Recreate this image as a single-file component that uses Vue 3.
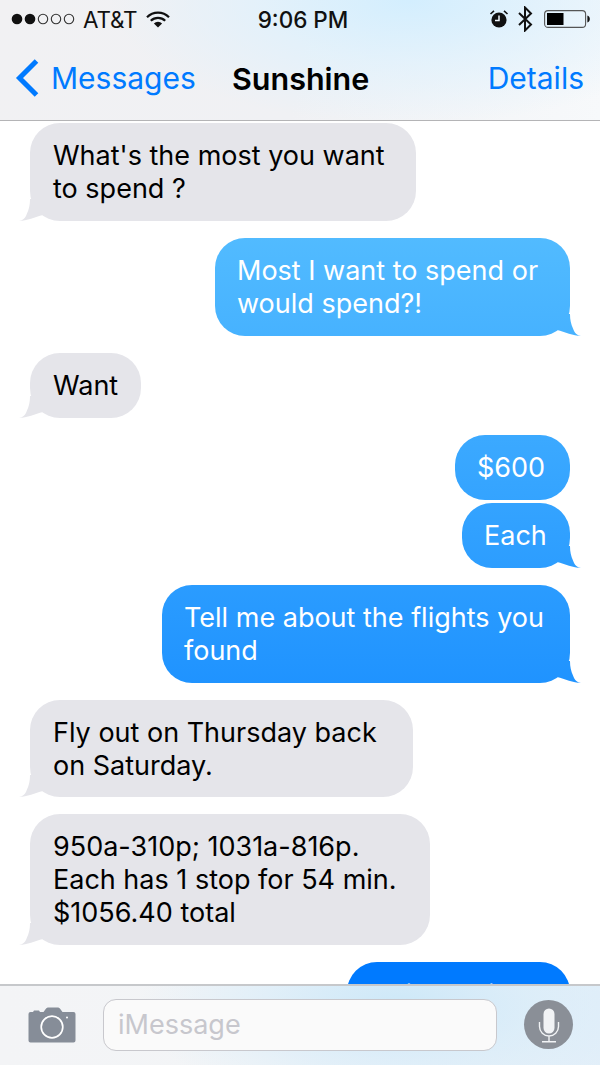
<template>
  <div class="phone">
    <header class="top">
      <div class="status">
        <div class="status-left">
          <svg class="dots" width="68" height="14" viewBox="0 0 68 14">
            <circle cx="6" cy="7" r="5.3" fill="#111" />
            <circle cx="19" cy="7" r="5.3" fill="#111" />
            <circle cx="32" cy="7" r="4.7" fill="none" stroke="#333" stroke-width="1.1" />
            <circle cx="45" cy="7" r="4.7" fill="none" stroke="#333" stroke-width="1.1" />
            <circle cx="58" cy="7" r="4.7" fill="none" stroke="#333" stroke-width="1.1" />
          </svg>
          <span class="carrier">AT&amp;T</span>
          <svg class="wifi" width="24" height="17" viewBox="0 0 24 17">
            <path d="M1 6.2a15.5 15.5 0 0 1 22 0" fill="none" stroke="#111" stroke-width="2.2" />
            <path d="M4.8 9.8a10.2 10.2 0 0 1 14.4 0" fill="none" stroke="#111" stroke-width="2.2" />
            <path d="M12 16.5 7.9 12.4a5.8 5.8 0 0 1 8.2 0z" fill="#111" />
          </svg>
        </div>
        <div class="time">9:06 PM</div>
        <div class="status-right">
          <svg class="alarm" width="20" height="20" viewBox="0 0 20 20">
            <circle cx="10" cy="11" r="7.6" fill="#111" />
            <path d="M10 6.5V11.5H6" fill="none" stroke="#f4faff" stroke-width="1.5" />
            <path d="M1.5 5 5 1.8M18.500 5 15 1.800" fill="none" stroke="#111" stroke-width="1.600" />
          </svg>
          <svg class="bt" width="16" height="26" viewBox="0 0 16 26">
            <path d="M2 7 14 18.500 8 24.500V1.500L14 7.500 2 19" fill="none" stroke="#111" stroke-width="2" />
          </svg>
          <svg width="46" height="20" viewBox="0 0 46 20">
            <rect x="0.6" y="1.6" width="41" height="16.8" rx="3.5" fill="none" stroke="#555" stroke-width="1.100" />
            <rect x="3" y="4" width="16.5" height="12" fill="#000" />
            <path d="M43.400 6.500c1.500.3 2.400 1.700 2.400 3.500s-.9 3.200-2.400 3.500z" fill="#111" />
          </svg>
        </div>
      </div>
      <nav class="nav">
        <div class="back">
          <svg width="26" height="40" viewBox="0 0 26 40">
            <path d="M21.500 3 4.500 20l17 17" fill="none" stroke="#007aff" stroke-width="5" />
          </svg>
          <span>Messages</span>
        </div>
        <div class="title">Sunshine</div>
        <div class="details">Details</div>
      </nav>
    </header>

    <main class="thread">
      <div
        v-for="(msg, i) in messages"
        :key="i"
        class="bubble"
        :class="[msg.me ? 'me' : 'them', { tail: msg.tail !== false, tight: msg.tight, snug: msg.snug }]"
        :style="{ width: msg.width + 'px' }"
      >{{ msg.text }}</div>
    </main>

    <footer class="bar">
      <svg class="camera" width="48" height="36" viewBox="0 0 48 36">
        <path d="M2.500 5H5l1-1.600h5L12 5h3.500l2.600-3.600Q19 .4 20 .4h10q1 0 1.900 1L34.500 5H45.500Q47.500 5 47.500 7V33.500Q47.500 35.500 45.500 35.500H2.500Q.5 35.500 .5 33.500V7Q.5 5 2.500 5z" fill="#868d98" />
        <circle cx="24" cy="20" r="10.800" fill="none" stroke="#fff" stroke-width="1.700" />
        <circle cx="39" cy="10.500" r="1" fill="#fff" />
      </svg>
      <div class="input">iMessage</div>
      <div class="mic">
        <svg width="22" height="38" viewBox="0 0 22 38">
          <rect x="5.500" y="2.500" width="11" height="25" rx="5.500" fill="#f1f3f5" />
          <path d="M1.500 16v4.500a9.500 9.500 0 0 0 19 0V16M11 30v5.500M4 35.800h14" fill="none" stroke="#f1f3f5" stroke-width="1.400" />
        </svg>
      </div>
    </footer>
  </div>
</template>

<script setup>
const messages = [
  { text: "What's the most you want\nto spend ?", width: 386 },
  { text: 'Most I want to spend or\nwould spend?!', width: 355, me: true },
  { text: 'Want', width: 111 },
  { text: '$600', width: 115, me: true, tail: false, tight: true },
  { text: 'Each', width: 108, me: true },
  { text: 'Tell me about the flights you\nfound', width: 408, me: true },
  { text: 'Fly out on Thursday back\non Saturday.', width: 383, snug: true },
  { text: '950a-310p; 1031a-816p.\nEach has 1 stop for 54 min.\n$1056.40 total', width: 400 },
  { text: 'Quick while I can', width: 223, me: true }
]
</script>

<style>
html,
body {
  margin: 0;
  background: #fff;
}
</style>

<style scoped>
.phone {
  width: 600px;
  height: 1065px;
  display: flex;
  flex-direction: column;
  overflow: hidden;
  font-family: Inter, "Liberation Sans", sans-serif;
  background: #fff;
}

.top {
  height: 120px;
  flex: none;
  border-bottom: 1px solid #b4b4b6;
  background:
    radial-gradient(ellipse 300px 125px at 410px 0, #d3eefe 0%, rgba(222, 241, 253, 0.7) 50%, rgba(240, 245, 250, 0) 100%),
    linear-gradient(100deg, #f1f1f3 0%, #f0f1f4 50%, #f7f9fb 100%);
}

.status {
  height: 38px;
  display: grid;
  grid-template-columns: 1fr auto 1fr;
  align-items: center;
  font-size: 22.500px;
  color: #111;
}

.status-left {
  display: flex;
  align-items: center;
  padding-left: 11px;
}

.carrier {
  margin-left: 4px;
  letter-spacing: -0.2px;
}

.wifi {
  margin-left: 9px;
}

.time {
  font-weight: 500;
  padding-left: 6px;
}

.status-right {
  display: flex;
  align-items: center;
  justify-content: flex-end;
  padding-right: 10px;
}

.alarm {
  margin-right: 8px;
}

.bt {
  margin-right: 11px;
}

.nav {
  height: 82px;
  display: flex;
  align-items: center;
  position: relative;
  font-size: 30px;
  padding-bottom: 2px;
  box-sizing: border-box;
}

.back {
  display: flex;
  align-items: center;
  color: #007aff;
  padding-left: 15px;
  gap: 10px;
  width: 232px;
  box-sizing: border-box;
}

.title {
  font-size: 30.500px;
  font-weight: 600;
  color: #000;
}

.details {
  margin-left: auto;
  padding-right: 16px;
  color: #007aff;
}

.thread {
  flex: 1;
  min-height: 0;
  overflow: hidden;
  display: flex;
  flex-direction: column;
  gap: 17px;
  padding-top: 2px;
}

.bubble {
  position: relative;
  flex: none;
  box-sizing: border-box;
  padding: 16px 0 16px 23px;
  border-radius: 30px;
  font-size: 27px;
  line-height: 33px;
  white-space: pre-line;
}

.bubble.tight {
  margin-bottom: -14px;
}

.bubble.snug {
  padding-bottom: 15px;
}

.them {
  align-self: flex-start;
  margin-left: 30px;
  background: #e5e5ea;
  color: #000;
}

.me {
  align-self: flex-end;
  margin-right: 30px;
  padding-left: 22px;
  background: linear-gradient(180deg, #58c0ff 180px, #007aff 965px) fixed;
  color: #fff;
}

.tail::after {
  content: "";
  position: absolute;
  bottom: 0;
  width: 27px;
  height: 24px;
}

.them.tail::after {
  left: -11px;
  background: #e5e5ea;
  clip-path: path("M0 23.800C4 23.500 6.500 21 8 16.500C10 12 11 8 11 2H27V17L24 18C16 20 8 23.800 0 23.800Z");
}

.me.tail::after {
  right: -11px;
  background: inherit;
  clip-path: path("M27 23.800C23 23.500 20.500 21 19 16.500C17 12 16 8 16 2H0V17L3 18C11 20 19 23.800 27 23.800Z");
}

.bar {
  height: 81px;
  flex: none;
  box-sizing: border-box;
  position: relative;
  border-top: 2px solid #c6c8cb;
  display: flex;
  align-items: center;
  padding: 0 27px 2px 28px;
  background:
    radial-gradient(ellipse 260px 110px at 400px 20px, #cde8f8 0%, rgba(216, 236, 249, 0.7) 50%, rgba(235, 243, 250, 0) 100%),
    linear-gradient(90deg, #f3f4f6 0%, #f3f5f7 45%, #e3eff9 100%);
}

.camera {
  flex: none;
  margin-right: 27px;
}

.input {
  width: 394px;
  height: 52px;
  flex: none;
  box-sizing: border-box;
  border: 1px solid #c8c8cd;
  border-radius: 13px;
  background: #fafafa;
  color: #c7c7cd;
  font-size: 27px;
  line-height: 50px;
  padding-left: 14px;
  margin-right: 27px;
}

.mic {
  width: 49px;
  height: 49px;
  flex: none;
  border-radius: 50%;
  background: #8a8f97;
  display: flex;
  align-items: center;
  justify-content: center;
}
</style>
